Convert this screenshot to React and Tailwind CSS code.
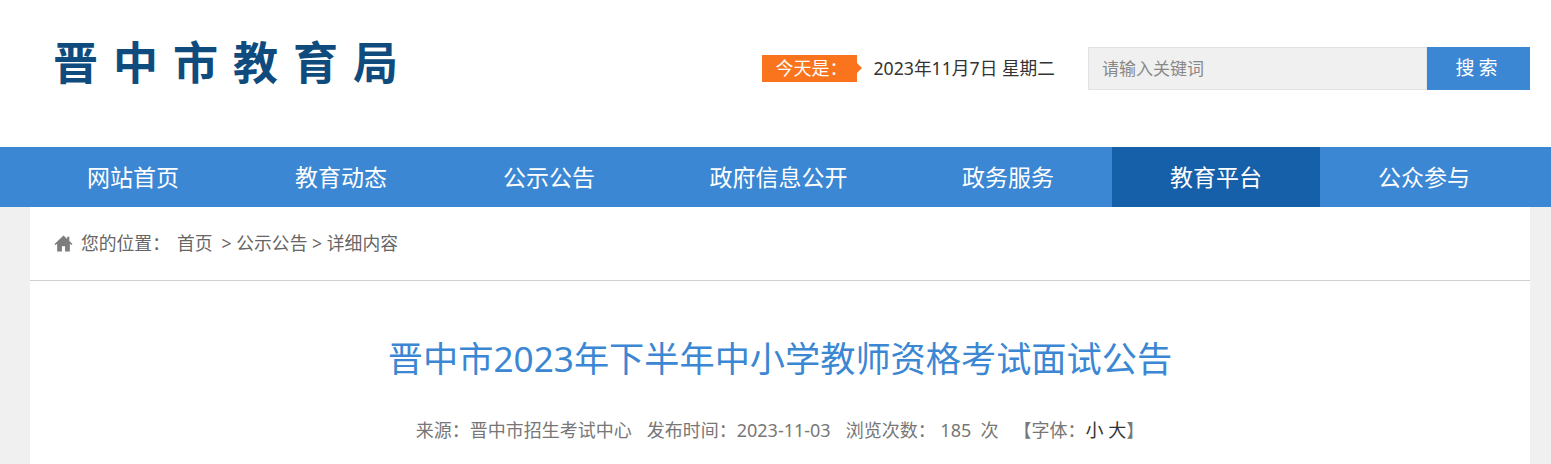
import { Fragment } from 'react';

const font = { fontFamily: '"Noto Sans", "Noto Sans CJK SC", sans-serif' };

const navItems = ['网站首页', '教育动态', '公示公告', '政府信息公开', '政务服务', '教育平台', '公众参与'];
const logoChars = ['晋', '中', '市', '教', '育', '局'];

// Site header with logo, date and search
const Header = () => (
  <div className="h-[147px] bg-white flex items-start pl-[53px] pr-[21px]">
    <div className="flex gap-[15px] mt-[34px] text-[45px] leading-[58px] font-bold text-[#0f4c7d]">
      {logoChars.map((c) => (
        <span key={c}>{c}</span>
      ))}
    </div>
    <div className="ml-auto flex items-center mt-[47px] h-[43px]">
      <div className="relative w-[95px] h-[27px] bg-[#fa741e] text-white text-[18px] leading-[27px] pl-[13px] whitespace-nowrap">
        今天是：
        <span className="absolute right-[-5px] top-[8px] w-0 h-0 border-y-[5px] border-y-transparent border-l-[5px] border-l-[#fa741e]"></span>
      </div>
      <div className="ml-[16px] text-[17.7px] text-[#333] whitespace-nowrap">2023年11月7日 星期二</div>
      <div className="ml-[33px] flex h-[43px]">
        <div className="w-[339px] bg-[#f0f0f0] border border-[#e2e2e2] pl-[13px] text-[17px] leading-[41px] text-[#888]">
          请输入关键词
        </div>
        <div className="w-[103px] bg-[#3b87d4] text-white text-[19px] leading-[43px] text-center tracking-[4px]">搜索</div>
      </div>
    </div>
  </div>
);

const Nav = () => (
  <div className="h-[60px] bg-[#3b87d4] pl-[29px]">
    <div className="grid grid-cols-[208px_208px_208px_251px_208px_208px_208px] h-full">
      {navItems.map((item) => (
        <div
          key={item}
          className={`flex items-center justify-center text-white text-[23px] ${item === '教育平台' ? 'bg-[#1660aa]' : ''}`}
        >
          {item}
        </div>
      ))}
    </div>
  </div>
);

const Breadcrumb = () => (
  <div className="h-[74px] border-b border-[#cfcfcf] flex items-center pl-[24px] text-[17.8px] text-[#666]">
    <svg className="w-[19px] h-[19px] mr-[8px]" viewBox="0 0 18 18" fill="#7d7d7d">
      <path d="M9 1.5 0.5 9.5l1 1L3 9.2V16.5h4.5v-5h3v5H15V9.2l1.5 1.3 1-1L14.5 6.6V2.5H12.5v2.2z" />
    </svg>
    <span>您的位置：</span>
    <span className="ml-[7px]">首页</span>
    <span className="ml-[9px]">&gt; 公示公告 &gt; 详细内容</span>
  </div>
);

const Meta = () => {
  const parts = ['来源：晋中市招生考试中心', '发布时间：2023-11-03', '浏览次数： 185  次'];
  return (
    <div className="mt-[34px] flex justify-center text-[18px] text-[#777] whitespace-pre">
      {parts.map((p) => (
        <Fragment key={p}>
          <span className="mr-[15px]">{p}</span>
        </Fragment>
      ))}
      <span>
        【字体：<span className="text-[#333]">小 大</span>】
      </span>
    </div>
  );
};

export default function App() {
  return (
    <div style={font} className="h-[464px] overflow-hidden bg-[#f0f0f0]">
      <Header />
      <Nav />
      <div className="mx-[30px] w-[1500px] h-[300px] bg-white">
        <Breadcrumb />
        <h1 className="mt-[52px] text-center text-[35.2px] leading-[50px] font-normal text-[#3b87d4]">
          晋中市2023年下半年中小学教师资格考试面试公告
        </h1>
        <Meta />
      </div>
    </div>
  );
}
